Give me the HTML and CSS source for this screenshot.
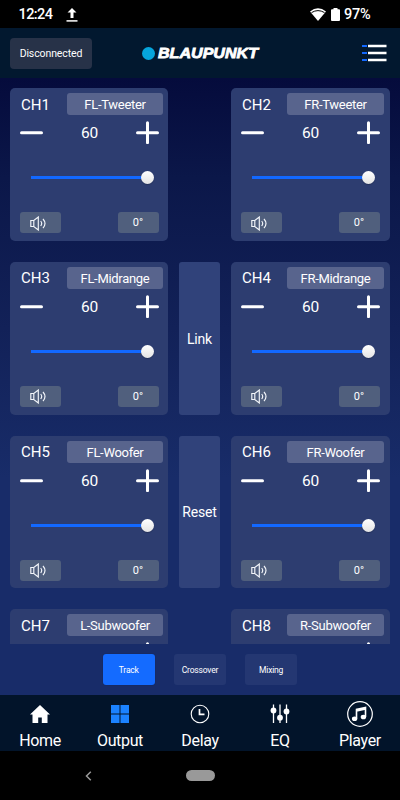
FILE: index.html
```html
<!DOCTYPE html>
<html lang="en">
<head>
<meta charset="utf-8">
<title>Output</title>
<link rel="stylesheet" href="styles.css">
</head>
<body>
<svg class="defs" width="0" height="0">
  <symbol id="minus" viewBox="0 0 23 23"><path d="M1.5 11.7h20" stroke="#fff" stroke-width="3" stroke-linecap="round"/></symbol>
  <symbol id="plus" viewBox="0 0 23 23"><path d="M1.5 11.7h20M11.5 1.7v20" stroke="#fff" stroke-width="3" stroke-linecap="round"/></symbol>
  <symbol id="speaker" viewBox="0 0 17 15"><path d="M.8 4.500h3L8.300 1v13L3.800 10.500h-3zM3.800 4.500v6M10.700 5q2 2.500 0 5M13 3q4 4.500 0 9" fill="none" stroke="#f2f5fa" stroke-width="1.150"/></symbol>
</svg>
<div class="status">
  <span class="time">12:24</span>
  <svg class="upload" width="12" height="14" viewBox="0 0 12 14"><path d="M.5 12.900h11" stroke="#fff" stroke-width="1.500"/><path d="M6 0l4.500 4.500H7.500V10h-3V4.500h-3z" fill="#fff"/></svg>
  <svg class="wifi" width="16" height="13" viewBox="0 0 16 13"><path d="M0 3.500Q8-3 16 3.500L8 13z" fill="#fff"/><path d="M1.500 4.600q6.500-4 13 0" fill="none" stroke="#000" stroke-width="1"/></svg>
  <svg class="battery" width="9" height="13" viewBox="0 0 9 13"><path d="M2.500 0h4v1.300H8q1 0 1 1V12q0 1-1 1H1q-1 0-1-1V2.300q0-1 1-1h1.500z" fill="#fff"/></svg>
  <span class="percent">97%</span>
</div>
<header class="header">
  <button class="connection">Disconnected</button>
  <div class="brand"><i class="brand-dot"></i><svg width="106" height="18"><text class="brand-name" x="3" y="14" textLength="100" lengthAdjust="spacingAndGlyphs">BLAUPUNKT</text></svg></div>
  <svg class="menu" width="25" height="18" viewBox="0 0 25 18"><path d="M0 2h5M0 9h5M0 16h5" stroke="#1268ff" stroke-width="2"/><path d="M6 2h18.500M6 9h18.500M6 16h18.500" stroke="#fff" stroke-width="2.300"/></svg>
</header>
<main class="main">
  <div class="channels">
    <section class="card"><div class="top"><h2>CH1</h2><span class="label">FL-Tweeter</span></div><div class="level"><svg><use href="#minus"/></svg><span>60</span><svg><use href="#plus"/></svg></div><div class="slider"><i></i></div><div class="tools"><button><svg><use href="#speaker"/></svg></button><button>0°</button></div></section>
    <section class="card right"><div class="top"><h2>CH2</h2><span class="label">FR-Tweeter</span></div><div class="level"><svg><use href="#minus"/></svg><span>60</span><svg><use href="#plus"/></svg></div><div class="slider"><i></i></div><div class="tools"><button><svg><use href="#speaker"/></svg></button><button>0°</button></div></section>
    <section class="card"><div class="top"><h2>CH3</h2><span class="label">FL-Midrange</span></div><div class="level"><svg><use href="#minus"/></svg><span>60</span><svg><use href="#plus"/></svg></div><div class="slider"><i></i></div><div class="tools"><button><svg><use href="#speaker"/></svg></button><button>0°</button></div></section>
    <button class="action">Link</button>
    <section class="card right"><div class="top"><h2>CH4</h2><span class="label">FR-Midrange</span></div><div class="level"><svg><use href="#minus"/></svg><span>60</span><svg><use href="#plus"/></svg></div><div class="slider"><i></i></div><div class="tools"><button><svg><use href="#speaker"/></svg></button><button>0°</button></div></section>
    <section class="card"><div class="top"><h2>CH5</h2><span class="label">FL-Woofer</span></div><div class="level"><svg><use href="#minus"/></svg><span>60</span><svg><use href="#plus"/></svg></div><div class="slider"><i></i></div><div class="tools"><button><svg><use href="#speaker"/></svg></button><button>0°</button></div></section>
    <button class="action">Reset</button>
    <section class="card right"><div class="top"><h2>CH6</h2><span class="label">FR-Woofer</span></div><div class="level"><svg><use href="#minus"/></svg><span>60</span><svg><use href="#plus"/></svg></div><div class="slider"><i></i></div><div class="tools"><button><svg><use href="#speaker"/></svg></button><button>0°</button></div></section>
    <section class="card"><div class="top"><h2>CH7</h2><span class="label">L-Subwoofer</span></div><div class="level"><svg><use href="#minus"/></svg><span></span><svg><use href="#plus"/></svg></div></section>
    <section class="card right"><div class="top"><h2>CH8</h2><span class="label">R-Subwoofer</span></div><div class="level"><svg><use href="#minus"/></svg><span></span><svg><use href="#plus"/></svg></div></section>
  </div>
  <div class="tabs"><button class="on">Track</button><button>Crossover</button><button>Mixing</button></div>
</main>
<nav class="nav">
  <a><svg width="26" height="26" viewBox="0 0 26 26"><path d="M13 4L3 13.500h2.500V22h5.700v-5.500h3.600V22h5.700v-8.500H23z" fill="#fff"/></svg>Home</a>
  <a><svg width="26" height="26" viewBox="0 0 26 26"><path d="M4 4h8.500v8.500H4zM13.500 4H22v8.500h-8.500zM4 13.500h8.500V22H4zM13.500 13.500H22V22h-8.500z" fill="#1b82ff"/></svg>Output</a>
  <a><svg width="26" height="26" viewBox="0 0 26 26" fill="none" stroke="#fff"><circle cx="13" cy="13" r="8.800" stroke-width="1.100"/><path d="M12.500 8v5.300H17.500" stroke-width="1.700"/></svg>Delay</a>
  <a><svg width="26" height="26" viewBox="0 0 26 26"><path d="M6.500 3.500v18.500M13 3.500v18.500M19.500 3.500v18.500" stroke="#fff" stroke-width="1.300"/><g fill="#fff"><circle cx="6.500" cy="9.500" r="2.900"/><circle cx="13" cy="16.700" r="2.900"/><circle cx="19.500" cy="10.500" r="2.900"/></g></svg>EQ</a>
  <a><svg width="26" height="26" viewBox="0 0 26 26"><circle cx="13" cy="13" r="12.300" fill="none" stroke="#fff" stroke-width="1.200"/><path d="M9.500 17.500V8.500l9-2v9.500M9.500 10l9-2" fill="none" stroke="#fff" stroke-width="1.600"/><ellipse cx="7.600" cy="17.700" rx="2.700" ry="2.300" fill="#fff"/><ellipse cx="16.400" cy="16" rx="2.700" ry="2.300" fill="#fff"/></svg>Player</a>
</nav>
<div class="system"><svg width="7" height="10" viewBox="0 0 7 10"><path d="M5.800.8L1.500 5l4.300 4.200" fill="none" stroke="#999" stroke-width="1.500"/></svg><i></i></div>
</body>
</html>
```

FILE: styles.css
```css
* { box-sizing: border-box; }
body { margin: 0; width: 400px; height: 800px; overflow: hidden; background: #000; color: #fff; font-family: Roboto, "Liberation Sans", sans-serif; display: flex; flex-direction: column; }
.defs { position: absolute; }
button { border: 0; padding: 0; color: inherit; font: inherit; }
svg { display: block; flex: none; }
.status { height: 28px; display: flex; align-items: center; padding: 1px 28px 0 18.5px; }
.time { font-size: 14.5px; font-weight: 500; width: 47px; line-height: 20px; letter-spacing: -.6px; }
.wifi { margin-left: auto; }
.battery { margin: 0 4px 0 5px; }
.percent { font-size: 14.500px; font-weight: 500; width: 28px; letter-spacing: -.2px; white-space: nowrap; }
.header { height: 50px; background: #02182f; display: flex; align-items: center; padding: 0 13px 0 10px; }
.connection { width: 82px; height: 31px; border-radius: 4px; background: #273248; font-size: 10.500px; letter-spacing: -.1px; }
.brand { display: flex; align-items: center; margin-left: 49.5px; height: 18px; }
.brand-dot { width: 13px; height: 13px; border-radius: 50%; background: #06a5dc; }
.brand-name { font: italic 700 15.5px "Liberation Sans", sans-serif; fill: #fff; stroke: #fff; stroke-width: .8px; }
.menu { margin-left: auto; }
.main { height: 617px; background: linear-gradient(#050b3c 0, #0b1749 100px, #122158 250px, #182c69 400px, #182c69 100%); }
.channels { height: 566px; overflow: hidden; padding: 10px 10.500px 0 10px; display: grid; grid-template-columns: 158px 41px 158.500px; grid-auto-rows: 152.800px; column-gap: 11px; row-gap: 21px; }
.right { grid-column: 3; }
.card { border-radius: 5px; background: #2d3d70; padding: 5px 5px 0 9px; }
.card.right { padding-right: 5.500px; }
.top { height: 22px; display: flex; align-items: center; justify-content: space-between; }
h2 { margin: 0 0 0 2px; padding-top: 1px; font-size: 15px; line-height: 22px; font-weight: 400; }
.label { width: 96px; height: 22px; padding-top: 1px; border-radius: 3px; background: #58648d; text-align: center; font-size: 13px; line-height: 22px; letter-spacing: -.3px; }
.right .label { width: 97px; }
.level { height: 23px; margin: 6px 4px 0 1px; display: flex; align-items: center; justify-content: space-between; font-size: 15.500px; line-height: 23px; letter-spacing: -.3px; }
.level span { padding-top: 2px; }
.level svg { width: 23px; height: 23px; }
.slider { width: 117px; height: 13px; margin: 27px 0 0 11.500px; display: flex; align-items: center; justify-content: flex-end; background: linear-gradient(#1268ff, #1268ff) center / 100% 3px no-repeat; }
.slider i { width: 13px; height: 13px; flex: none; margin-right: -6px; border-radius: 50%; background: linear-gradient(#fff, #e4e4e4); box-shadow: 0 1px 1px #0003; }
.tools { margin: 28px 4.500px 0 .5px; display: flex; justify-content: space-between; }
.tools button { width: 41px; height: 21px; border-radius: 3px; background: #505f7d; font-size: 11px; line-height: 21px; }
.tools svg { width: 17px; height: 15px; margin: 1px 0 0 10px; }
.action { padding-top: 1px; border-radius: 3px; background: #30427a; font-size: 14px; letter-spacing: -.2px; }
.tabs { height: 51px; padding: 10px 0 0 103px; display: flex; gap: 19.700px; }
.tabs button { width: 51.500px; height: 31px; border-radius: 3px; background: #243772; font-size: 8.500px; letter-spacing: -.2px; }
.tabs .on { background: #146bff; box-shadow: 0 0 1px #0006; }
.nav { height: 56px; background: #02142a; display: grid; grid-template-columns: repeat(5, 80px); font-size: 16px; letter-spacing: -.35px; }
.nav a { display: flex; flex-direction: column; align-items: center; padding-top: 6px; line-height: 18px; gap: 5px; }
.system { height: 49px; display: flex; align-items: center; padding-left: 85px; }
.system i { width: 29px; height: 11px; border-radius: 6px; background: #999; margin-left: 94px; }
```
